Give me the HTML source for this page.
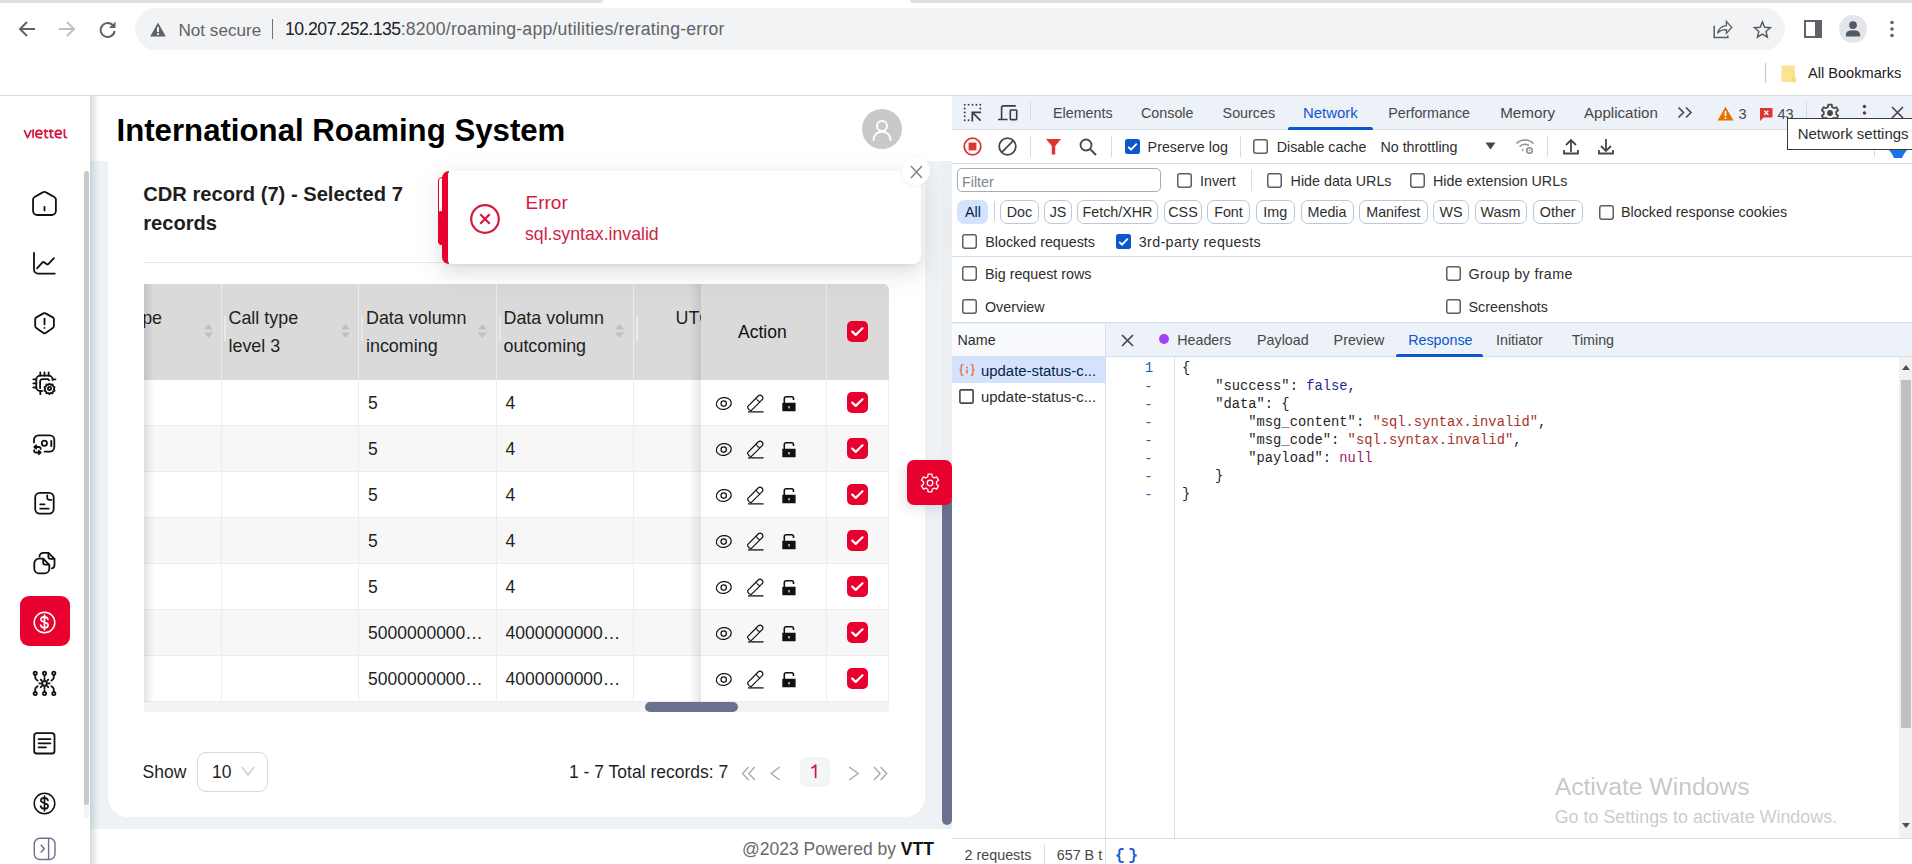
<!DOCTYPE html>
<html><head><meta charset="utf-8"><title>International Roaming System</title>
<style>
html,body{margin:0;padding:0;width:1912px;height:864px;overflow:hidden;background:#fff;position:relative;font-family:'Liberation Sans',sans-serif}
.t{position:absolute;white-space:pre;line-height:1}
.r{position:absolute;display:block}
svg.r{overflow:visible}
</style></head><body>

<div class="r" style="left:0px;top:0px;width:603px;height:3px;background:#dee1e6;border-bottom-right-radius:3px"></div>
<div class="r" style="left:910px;top:0px;width:1002px;height:3px;background:#dee1e6;border-bottom-left-radius:3px"></div>
<div class="r" style="left:135px;top:8px;width:1650px;height:42px;background:#f1f3f4;border-radius:21px"></div>
<svg class="r" style="left:18px;top:20px;" width="18" height="18" viewBox="0 0 18 18"><path d="M17 9H2.5M9 2L2 9l7 7" fill="none" stroke="#5f6368" stroke-width="2"/></svg>
<svg class="r" style="left:58px;top:20px;" width="18" height="18" viewBox="0 0 18 18"><path d="M1 9h14.5M9 2l7 7-7 7" fill="none" stroke="#bdc1c6" stroke-width="2"/></svg>
<svg class="r" style="left:98px;top:20px;" width="19" height="19" viewBox="0 0 19 19"><path d="M15.5 6.2A7 7 0 1 0 16.6 11" fill="none" stroke="#5f6368" stroke-width="2"/><path d="M17.5 1.5v6.5h-6.5z" fill="#5f6368"/></svg>
<svg class="r" style="left:150px;top:22px;" width="16" height="15" viewBox="0 0 16 15"><path d="M8 0.5L15.8 14.5H0.2z" fill="#5f6368"/><rect x="7.1" y="5" width="1.8" height="5" fill="#fff"/><rect x="7.1" y="11.2" width="1.8" height="1.8" fill="#fff"/></svg>
<div class="t" style="left:178.5px;top:21.86px;font-size:17.1px;color:#5f6368;font-weight:400;font-family:'Liberation Sans',sans-serif;">Not secure</div>
<div class="r" style="left:271.5px;top:19px;width:1.3px;height:20px;background:#6f7377"></div>
<div class="t" style="left:285px;top:21.40px;font-size:17.65px;color:#5f6368;font-family:'Liberation Sans',sans-serif"><span style="color:#202124;letter-spacing:-0.5px">10.207.252.135</span><span style="letter-spacing:0.22px">:8200/roaming-app/utilities/rerating-error</span></div>
<svg class="r" style="left:1705px;top:12px;" width="30" height="30" viewBox="0 0 30 30"><path d="M9.2 13.8V25.5H22.8V23.4" fill="none" stroke="#585b5f" stroke-width="1.5"/><path d="M12.6 21.3Q14 14.2 21.4 13.6V9.4L26.7 15.4 21.4 21.4V17.6Q15.6 17.4 12.6 21.3Z" fill="none" stroke="#585b5f" stroke-width="1.3" stroke-linejoin="miter"/></svg>
<svg class="r" style="left:1752px;top:20px;" width="21" height="19" viewBox="0 0 21 19"><path d="M10.40 1.90 L12.62 7.24 L18.39 7.70 L13.99 11.47 L15.34 17.10 L10.40 14.08 L5.46 17.10 L6.81 11.47 L2.41 7.70 L8.18 7.24Z" fill="none" stroke="#585b5f" stroke-width="1.45" stroke-linejoin="miter"/></svg>
<svg class="r" style="left:1804px;top:20px;" width="18" height="18" viewBox="0 0 18 18"><rect x="1" y="1" width="16" height="16" fill="none" stroke="#5f6368" stroke-width="2"/><rect x="11" y="1" width="6" height="16" fill="#5f6368"/></svg>
<div class="r" style="left:1839px;top:15px;width:28px;height:28px;background:#e3e5e8;border-radius:50%"></div>
<svg class="r" style="left:1845px;top:20px;" width="16" height="17" viewBox="0 0 16 17"><circle cx="8" cy="5.1" r="3.9" fill="#525a6a"/><path d="M0.9 16.5V14.6Q0.9 10.2 8 10.2Q15.1 10.2 15.1 14.6V16.5Z" fill="#525a6a"/></svg>
<svg class="r" style="left:1889px;top:20px;" width="6" height="18" viewBox="0 0 6 18"><circle cx="3" cy="2.5" r="1.8" fill="#5f6368"/><circle cx="3" cy="9" r="1.8" fill="#5f6368"/><circle cx="3" cy="15.5" r="1.8" fill="#5f6368"/></svg>
<div class="r" style="left:1765px;top:63px;width:1px;height:20px;background:#c7c7c7"></div>
<svg class="r" style="left:1780px;top:64px;" width="17" height="19" viewBox="0 0 17 19"><path d="M1.5 1.5h11.5a2 2 0 0 1 2 2v13.5a1 1 0 0 1-1 1H2.5a1 1 0 0 1-1-1z" fill="#fde293"/><rect x="12.5" y="13.5" width="3" height="4.5" rx="0.5" fill="#fde293" stroke="#f2c94c" stroke-width="0.6"/></svg>
<div class="t" style="left:1808px;top:66.09px;font-size:14.6px;color:#202124;font-weight:400;font-family:'Liberation Sans',sans-serif;">All Bookmarks</div>
<div class="r" style="left:0px;top:95px;width:1912px;height:1px;background:#dadce0"></div>
<div class="r" style="left:0px;top:96px;width:90px;height:768px;background:#fff"></div>
<svg class="r" style="left:20px;top:120px;" width="52" height="26" viewBox="0 0 52 26"><g fill="none" stroke="#d4173f" stroke-width="1.75" stroke-linecap="butt" stroke-linejoin="round"><path d="M4.2 10.2L7.6 17.6 11.2 10.2"/><path d="M13.1 9.2V17.8"/><path d="M22.1 14.1H16.2M22 14.1C22 11.8 20.8 10.4 19.1 10.4 17.2 10.4 15.9 11.9 15.9 14.1 15.9 16.4 17.2 17.6 19.3 17.6H22"/><path d="M25.3 9.2V15.2C25.3 17 26 17.6 27.3 17.6H28.4M23.6 11H28.2"/><path d="M30.6 9.2V15.2C30.6 17 31.3 17.6 32.6 17.6H33.7M28.9 11H33.5"/><path d="M41.5 14.1H35.6M41.4 14.1C41.4 11.8 40.2 10.4 38.5 10.4 36.6 10.4 35.3 11.9 35.3 14.1 35.3 16.4 36.6 17.6 38.7 17.6H41.4"/><path d="M44.4 9V15.6C44.4 17 45 17.6 46.3 17.6H47.2"/></g></svg>
<div class="r" style="left:84px;top:171px;width:5px;height:647px;background:#f4f4f4;border-radius:3px"></div>
<div class="r" style="left:84px;top:171px;width:5px;height:634px;background:#c9c9c9;border-radius:3px"></div>
<svg class="r" style="left:28px;top:186px;" width="32" height="36" viewBox="0 0 32 36"><path d="M5.05 13.6Q5.05 12 6.6 11L14.3 6.6Q16.4 5.3 18.5 6.6L26.3 11Q27.9 12 27.9 13.6V24.8a4.2 4.2 0 0 1-4.2 4.2H9.25a4.2 4.2 0 0 1-4.2-4.2Z" fill="none" stroke="#111" stroke-width="1.8" stroke-linecap="round" stroke-linejoin="round"/><path d="M16.5 20.8V24.4" fill="none" stroke="#111" stroke-width="1.8" stroke-linecap="round" stroke-linejoin="round"/></svg>
<svg class="r" style="left:28px;top:246px;" width="32" height="36" viewBox="0 0 32 36"><path d="M6 6.8V23.6a4 4 0 0 0 4 4H26.8" fill="none" stroke="#111" stroke-width="1.8" stroke-linecap="round" stroke-linejoin="round"/><path d="M9 22.4L14.3 16.6Q15.2 15.6 16.3 16.4L18.5 18Q19.6 18.8 20.5 17.8L26 12.1" fill="none" stroke="#111" stroke-width="1.8" stroke-linecap="round" stroke-linejoin="round"/></svg>
<svg class="r" style="left:28px;top:306px;" width="32" height="36" viewBox="0 0 32 36"><path d="M15.4 7.4Q16.5 6.8 17.6 7.4L24.8 11.4Q25.9 12 25.9 13.3V20Q25.9 21.3 24.8 21.9L17.6 26.9Q16.5 27.6 15.4 26.9L8.3 21.9Q7.2 21.3 7.2 20V13.3Q7.2 12 8.3 11.4Z" fill="none" stroke="#111" stroke-width="1.8" stroke-linecap="round" stroke-linejoin="round"/><path d="M16.5 12.6V18.4" fill="none" stroke="#111" stroke-width="1.8" stroke-linecap="round" stroke-linejoin="round"/><circle cx="16.5" cy="21.9" r="0.9" fill="#111"/></svg>
<svg class="r" style="left:28px;top:366px;" width="32" height="36" viewBox="0 0 32 36"><path d="M24.6 14V13.6a4 4 0 0 0-4-4H12.3a4 4 0 0 0-4 4V21a4 4 0 0 0 4 4H14" fill="none" stroke="#111" stroke-width="1.8" stroke-linecap="round" stroke-linejoin="round"/><path d="M12.1 22.2V15.4a2.2 2.2 0 0 1 2.2-2.2H19a2 2 0 0 1 2 1" fill="none" stroke="#111" stroke-width="1.8" stroke-linecap="round" stroke-linejoin="round" stroke-width="1.6"/><path d="M12.3 6.4V9.6M16.5 6.4V9.6M20.6 6.4V9.6M5.3 13.3H8.3M5.3 17.4H8.3M5.3 21.5H8.3M24.6 13.3H27.5M12.3 25V28.2" fill="none" stroke="#111" stroke-width="1.8" stroke-linecap="round" stroke-linejoin="round" stroke-width="1.6"/><path d="M21.5 17.6l1.3 1.3 1.8-.4.4 1.8 1.6.9-.8 1.7.8 1.7-1.6.9-.4 1.8-1.8-.4-1.3 1.3-1.3-1.3-1.8.4-.4-1.8-1.6-.9.8-1.7-.8-1.7 1.6-.9.4-1.8 1.8.4z" fill="none" stroke="#111" stroke-width="1.8" stroke-linecap="round" stroke-linejoin="round" stroke-width="1.5"/><circle cx="21.5" cy="22.5" r="1.6" fill="none" stroke="#111" stroke-width="1.8" stroke-linecap="round" stroke-linejoin="round" stroke-width="1.5"/></svg>
<svg class="r" style="left:28px;top:426px;" width="32" height="36" viewBox="0 0 32 36"><path d="M6 16.4V13.8a4.5 4.5 0 0 1 4.5-4.5H21.8a4.5 4.5 0 0 1 4.5 4.5V21.1a4.5 4.5 0 0 1-4.5 4.5H16.6" fill="none" stroke="#111" stroke-width="1.8" stroke-linecap="round" stroke-linejoin="round"/><circle cx="16.4" cy="17.3" r="2.6" fill="none" stroke="#111" stroke-width="1.8" stroke-linecap="round" stroke-linejoin="round"/><path d="M23.3 14.8V20.2" fill="none" stroke="#111" stroke-width="1.8" stroke-linecap="round" stroke-linejoin="round"/><path d="M12.6 23V22.6a1.6 1.6 0 0 0-1.6-1.6H6.4M8.2 19.3L6.3 21 8.2 22.7M6.1 24.2V25a1.5 1.5 0 0 0 1.5 1.5H12.6M10.8 24.8L12.7 26.5 10.8 28.2" fill="none" stroke="#111" stroke-width="1.8" stroke-linecap="round" stroke-linejoin="round" stroke-width="1.6"/></svg>
<svg class="r" style="left:28px;top:486px;" width="32" height="36" viewBox="0 0 32 36"><rect x="7.2" y="6.9" width="18.5" height="20.8" rx="4.6" fill="none" stroke="#111" stroke-width="1.8" stroke-linecap="round" stroke-linejoin="round"/><path d="M19.2 9.4V11.4a2.4 2.4 0 0 0 2.4 2.4H23.4" fill="none" stroke="#111" stroke-width="1.8" stroke-linecap="round" stroke-linejoin="round"/><path d="M12.2 18.3H16.5M12.2 22.6H20.7" fill="none" stroke="#111" stroke-width="1.8" stroke-linecap="round" stroke-linejoin="round"/></svg>
<svg class="r" style="left:28px;top:546px;" width="32" height="36" viewBox="0 0 32 36"><path d="M11.5 10.6a3.8 3.8 0 0 1 3.8-3.8H20.4L26.5 12.8V19a3.5 3.5 0 0 1-2.6 3.4" fill="none" stroke="#111" stroke-width="1.8" stroke-linecap="round" stroke-linejoin="round"/><path d="M20.4 7V10.8a2 2 0 0 0 2 2H26.3" fill="none" stroke="#111" stroke-width="1.8" stroke-linecap="round" stroke-linejoin="round"/><path d="M6.3 17.2a4.5 4.5 0 0 1 4.5-4.5H15.2L21.3 18.8V22.8a4.5 4.5 0 0 1-4.5 4.5H10.8a4.5 4.5 0 0 1-4.5-4.5Z" fill="none" stroke="#111" stroke-width="1.8" stroke-linecap="round" stroke-linejoin="round"/><path d="M15.2 12.9V16.6a2 2 0 0 0 2 2H21.1" fill="none" stroke="#111" stroke-width="1.8" stroke-linecap="round" stroke-linejoin="round"/></svg>
<div class="r" style="left:20px;top:596px;width:50px;height:50px;background:#e8002e;border-radius:9px"></div>
<svg class="r" style="left:28px;top:605px;" width="32" height="36" viewBox="0 0 32 36"><circle cx="16.5" cy="17.5" r="10.3" fill="none" stroke="#fff" stroke-width="1.5"/><path d="M19.9 14.4c-.4-1.7-1.7-2.6-3.5-2.6-2 0-3.5 1.1-3.5 2.6 0 3.6 7.2 1.7 7.2 5.6 0 1.6-1.5 2.8-3.7 2.8-2 0-3.4-1-3.8-2.8M16.5 10.2V24.8" fill="none" stroke="#fff" stroke-width="1.7" stroke-linecap="round"/></svg>
<svg class="r" style="left:28px;top:666px;" width="32" height="36" viewBox="0 0 32 36"><g fill="none" stroke="#111" stroke-width="1.8" stroke-linecap="round" stroke-linejoin="round" stroke-width="1.6"><circle cx="7.2" cy="7.3" r="1.6"/><circle cx="16.5" cy="7.3" r="1.6"/><circle cx="25.8" cy="7.3" r="1.6"/><circle cx="7.2" cy="27.5" r="1.6"/><circle cx="16.5" cy="27.5" r="1.6"/><circle cx="25.8" cy="27.5" r="1.6"/><circle cx="16.5" cy="17.4" r="2.4" stroke-width="2"/><path d="M16.5 13.2V12.3M16.5 21.6V22.5M12.3 17.4H11.4M20.7 17.4H21.6M13.5 14.4l-.7-.7M19.5 20.4l.7.7M19.5 14.4l.7-.7M13.5 20.4l-.7.7" stroke-width="1.9"/><path d="M16.5 9V10.6M16.5 24.2V25.8M7.2 9V11.2Q7.2 12.4 8.2 13.4L9.6 14.6M25.8 9V11.2Q25.8 12.4 24.8 13.4L23.4 14.6M7.2 25.8V23.6Q7.2 22.4 8.2 21.4L9.6 20.2M25.8 25.8V23.6Q25.8 22.4 24.8 21.4L23.4 20.2"/></g></svg>
<svg class="r" style="left:28px;top:726px;" width="32" height="36" viewBox="0 0 32 36"><rect x="6.2" y="7.2" width="20.3" height="20.3" rx="2.6" fill="none" stroke="#111" stroke-width="1.8" stroke-linecap="round" stroke-linejoin="round"/><path d="M10.6 13.2H22.4M10.6 17.3H22.4M10.6 21.3H18" fill="none" stroke="#111" stroke-width="1.8" stroke-linecap="round" stroke-linejoin="round"/></svg>
<svg class="r" style="left:28px;top:786px;" width="32" height="36" viewBox="0 0 32 36"><circle cx="16.5" cy="17.5" r="10.3" fill="none" stroke="#111" stroke-width="1.5"/><path d="M19.9 14.4c-.4-1.7-1.7-2.6-3.5-2.6-2 0-3.5 1.1-3.5 2.6 0 3.6 7.2 1.7 7.2 5.6 0 1.6-1.5 2.8-3.7 2.8-2 0-3.4-1-3.8-2.8M16.5 10.2V24.8" fill="none" stroke="#111" stroke-width="1.7" stroke-linecap="round"/></svg>
<svg class="r" style="left:28px;top:832px;" width="32" height="32" viewBox="0 0 32 32"><rect x="6.3" y="6.3" width="20.7" height="21.2" rx="5.5" fill="none" stroke="#6b7190" stroke-width="1.4"/><path d="M20.6 6.3V27.5" stroke="#6b7190" stroke-width="1.4"/><path d="M13.2 13.3L16.2 16.7 13.2 20" fill="none" stroke="#6b7190" stroke-width="1.5" stroke-linecap="round" stroke-linejoin="round"/></svg>
<div class="r" style="left:90px;top:96px;width:862px;height:66px;background:#fff"></div>
<div class="r" style="left:90px;top:161px;width:862px;height:668px;background:#eef2f4"></div>
<div class="r" style="left:90px;top:829px;width:862px;height:35px;background:#fff"></div>
<div class="r" style="left:90px;top:96px;width:9px;height:768px;background:linear-gradient(90deg,rgba(120,135,145,0.30),rgba(120,135,145,0))"></div>
<div class="t" style="left:116.5px;top:114.88px;font-size:31.2px;color:#000;font-weight:700;font-family:'Liberation Sans',sans-serif;">International Roaming System</div>
<div class="r" style="left:862px;top:109px;width:40px;height:40px;background:#c9c9c9;border-radius:50%"></div>
<svg class="r" style="left:869px;top:117px;" width="26" height="26" viewBox="0 0 26 26"><circle cx="13" cy="9" r="5" fill="none" stroke="#fff" stroke-width="2"/><path d="M4.5 23c0-5 3.8-8.2 8.5-8.2s8.5 3.2 8.5 8.2" fill="none" stroke="#fff" stroke-width="2" stroke-linecap="round"/></svg>
<div class="r" style="left:108px;top:161px;width:817px;height:656px;background:#fff;border-radius:0 0 20px 20px"></div>
<div class="t" style="left:143.2px;top:183.57px;font-size:20.15px;color:#1e1e1e;font-weight:700;font-family:'Liberation Sans',sans-serif;">CDR record (7) - Selected 7</div>
<div class="t" style="left:143.2px;top:213.47px;font-size:20.15px;color:#1e1e1e;font-weight:700;font-family:'Liberation Sans',sans-serif;">records</div>
<div class="r" style="left:143px;top:262px;width:747px;height:1px;background:#e8e8e8"></div>
<div class="r" style="left:942px;top:161px;width:10px;height:668px;background:#eceff1"></div>
<div class="t" style="left:742px;top:840.62px;font-size:17.5px;color:#6b6b6b;font-family:'Liberation Sans',sans-serif">@2023 Powered by <b style="color:#111">VTT</b></div>
<div class="r" style="left:144px;top:284px;width:745px;height:428px;overflow:hidden;border-top-right-radius:6px">
<div class="r" style="left:0px;top:0px;width:745px;height:96px;background:#dadada"></div>
<div class="r" style="left:0px;top:96px;width:745px;height:46px;background:#ffffff"></div>
<div class="r" style="left:0px;top:141px;width:745px;height:1px;background:#ededed"></div>
<div class="r" style="left:0px;top:142px;width:745px;height:46px;background:#f7f7f7"></div>
<div class="r" style="left:0px;top:187px;width:745px;height:1px;background:#ededed"></div>
<div class="r" style="left:0px;top:188px;width:745px;height:46px;background:#ffffff"></div>
<div class="r" style="left:0px;top:233px;width:745px;height:1px;background:#ededed"></div>
<div class="r" style="left:0px;top:234px;width:745px;height:46px;background:#f7f7f7"></div>
<div class="r" style="left:0px;top:279px;width:745px;height:1px;background:#ededed"></div>
<div class="r" style="left:0px;top:280px;width:745px;height:46px;background:#ffffff"></div>
<div class="r" style="left:0px;top:325px;width:745px;height:1px;background:#ededed"></div>
<div class="r" style="left:0px;top:326px;width:745px;height:46px;background:#f7f7f7"></div>
<div class="r" style="left:0px;top:371px;width:745px;height:1px;background:#ededed"></div>
<div class="r" style="left:0px;top:372px;width:745px;height:46px;background:#ffffff"></div>
<div class="r" style="left:0px;top:417px;width:745px;height:1px;background:#ededed"></div>
<div class="r" style="left:77px;top:0px;width:1px;height:96px;background:#ececec"></div>
<div class="r" style="left:77px;top:96px;width:1px;height:322px;background:#ededed"></div>
<div class="r" style="left:214px;top:0px;width:1px;height:96px;background:#ececec"></div>
<div class="r" style="left:214px;top:96px;width:1px;height:322px;background:#ededed"></div>
<div class="r" style="left:352px;top:0px;width:1px;height:96px;background:#ececec"></div>
<div class="r" style="left:352px;top:96px;width:1px;height:322px;background:#ededed"></div>
<div class="r" style="left:489px;top:0px;width:1px;height:96px;background:#ececec"></div>
<div class="r" style="left:489px;top:96px;width:1px;height:322px;background:#ededed"></div>
<div class="r" style="left:80px;top:32px;width:2px;height:25px;background:#e9e9e9"></div>
<div class="r" style="left:217px;top:32px;width:2px;height:25px;background:#e9e9e9"></div>
<div class="r" style="left:355px;top:32px;width:2px;height:25px;background:#e9e9e9"></div>
<div class="r" style="left:492px;top:32px;width:2px;height:25px;background:#e9e9e9"></div>
<div class="t" style="left:-10.800000000000011px;top:25.79px;font-size:17.9px;color:#1f1f1f;font-weight:400;">ype</div>
<div class="t" style="left:84.5px;top:25.79px;font-size:17.9px;color:#1f1f1f;font-weight:400;">Call type</div>
<div class="t" style="left:84.5px;top:53.59px;font-size:17.9px;color:#1f1f1f;font-weight:400;">level 3</div>
<div class="t" style="left:222px;top:25.79px;font-size:17.9px;color:#1f1f1f;font-weight:400;">Data volumn</div>
<div class="t" style="left:222px;top:53.59px;font-size:17.9px;color:#1f1f1f;font-weight:400;">incoming</div>
<div class="t" style="left:359.5px;top:25.79px;font-size:17.9px;color:#1f1f1f;font-weight:400;">Data volumn</div>
<div class="t" style="left:359.5px;top:53.59px;font-size:17.9px;color:#1f1f1f;font-weight:400;">outcoming</div>
<div class="t" style="left:531.5px;top:25.79px;font-size:17.9px;color:#1f1f1f;font-weight:400;">UTC</div>
<svg class="r" style="left:58.5px;top:39px" width="11" height="16" viewBox="0 0 11 16"><path d="M5.5 1L10 6.5H1z" fill="#bfbfbf"/><path d="M5.5 15L10 9.5H1z" fill="#bfbfbf"/></svg>
<svg class="r" style="left:196px;top:39px" width="11" height="16" viewBox="0 0 11 16"><path d="M5.5 1L10 6.5H1z" fill="#bfbfbf"/><path d="M5.5 15L10 9.5H1z" fill="#bfbfbf"/></svg>
<svg class="r" style="left:333px;top:39px" width="11" height="16" viewBox="0 0 11 16"><path d="M5.5 1L10 6.5H1z" fill="#bfbfbf"/><path d="M5.5 15L10 9.5H1z" fill="#bfbfbf"/></svg>
<svg class="r" style="left:470px;top:39px" width="11" height="16" viewBox="0 0 11 16"><path d="M5.5 1L10 6.5H1z" fill="#bfbfbf"/><path d="M5.5 15L10 9.5H1z" fill="#bfbfbf"/></svg>
<div class="t" style="left:224px;top:111.12px;font-size:17.5px;color:#1f1f1f;font-weight:400;">5</div>
<div class="t" style="left:361.5px;top:111.12px;font-size:17.5px;color:#1f1f1f;font-weight:400;">4</div>
<div class="t" style="left:224px;top:157.12px;font-size:17.5px;color:#1f1f1f;font-weight:400;">5</div>
<div class="t" style="left:361.5px;top:157.12px;font-size:17.5px;color:#1f1f1f;font-weight:400;">4</div>
<div class="t" style="left:224px;top:203.12px;font-size:17.5px;color:#1f1f1f;font-weight:400;">5</div>
<div class="t" style="left:361.5px;top:203.12px;font-size:17.5px;color:#1f1f1f;font-weight:400;">4</div>
<div class="t" style="left:224px;top:249.12px;font-size:17.5px;color:#1f1f1f;font-weight:400;">5</div>
<div class="t" style="left:361.5px;top:249.12px;font-size:17.5px;color:#1f1f1f;font-weight:400;">4</div>
<div class="t" style="left:224px;top:295.12px;font-size:17.5px;color:#1f1f1f;font-weight:400;">5</div>
<div class="t" style="left:361.5px;top:295.12px;font-size:17.5px;color:#1f1f1f;font-weight:400;">4</div>
<div class="t" style="left:224px;top:341.12px;font-size:17.5px;color:#1f1f1f;font-weight:400;">5000000000…</div>
<div class="t" style="left:361.5px;top:341.12px;font-size:17.5px;color:#1f1f1f;font-weight:400;">4000000000…</div>
<div class="t" style="left:224px;top:387.12px;font-size:17.5px;color:#1f1f1f;font-weight:400;">5000000000…</div>
<div class="t" style="left:361.5px;top:387.12px;font-size:17.5px;color:#1f1f1f;font-weight:400;">4000000000…</div>
<div class="r" style="left:0px;top:0px;width:10px;height:418px;background:linear-gradient(90deg,rgba(0,0,0,0.10),rgba(0,0,0,0))"></div>
<div class="r" style="left:557px;top:0px;width:188px;height:96px;background:#dadada"></div>
<div class="r" style="left:557px;top:96px;width:188px;height:46px;background:#ffffff"></div>
<div class="r" style="left:557px;top:141px;width:188px;height:1px;background:#ededed"></div>
<div class="r" style="left:557px;top:142px;width:188px;height:46px;background:#f7f7f7"></div>
<div class="r" style="left:557px;top:187px;width:188px;height:1px;background:#ededed"></div>
<div class="r" style="left:557px;top:188px;width:188px;height:46px;background:#ffffff"></div>
<div class="r" style="left:557px;top:233px;width:188px;height:1px;background:#ededed"></div>
<div class="r" style="left:557px;top:234px;width:188px;height:46px;background:#f7f7f7"></div>
<div class="r" style="left:557px;top:279px;width:188px;height:1px;background:#ededed"></div>
<div class="r" style="left:557px;top:280px;width:188px;height:46px;background:#ffffff"></div>
<div class="r" style="left:557px;top:325px;width:188px;height:1px;background:#ededed"></div>
<div class="r" style="left:557px;top:326px;width:188px;height:46px;background:#f7f7f7"></div>
<div class="r" style="left:557px;top:371px;width:188px;height:1px;background:#ededed"></div>
<div class="r" style="left:557px;top:372px;width:188px;height:46px;background:#ffffff"></div>
<div class="r" style="left:557px;top:417px;width:188px;height:1px;background:#ededed"></div>
<div class="r" style="left:682px;top:0px;width:1px;height:96px;background:#ececec"></div>
<div class="r" style="left:682px;top:96px;width:1px;height:322px;background:#ededed"></div>
<div class="r" style="left:744px;top:96px;width:1px;height:322px;background:#f0f0f0"></div>
<div class="r" style="left:545px;top:0px;width:12px;height:418px;background:linear-gradient(90deg,rgba(0,0,0,0),rgba(0,0,0,0.09))"></div>
<div class="t" style="left:594px;top:39.82px;font-size:17.5px;color:#111;font-weight:400;">Action</div>
<svg class="r" style="left:702.5px;top:36.5px" width="21" height="21" viewBox="0 0 21 21"><rect x="0" y="0" width="21" height="21" rx="5" fill="#e8002e"/><path d="M5.3 10.6l3.4 3.3 6.8-6.6" fill="none" stroke="#fff" stroke-width="2.2" stroke-linecap="round" stroke-linejoin="round"/></svg>
<svg class="r" style="left:702.5px;top:107.5px" width="21" height="21" viewBox="0 0 21 21"><rect x="0" y="0" width="21" height="21" rx="5" fill="#e8002e"/><path d="M5.3 10.6l3.4 3.3 6.8-6.6" fill="none" stroke="#fff" stroke-width="2.2" stroke-linecap="round" stroke-linejoin="round"/></svg>
<svg class="r" style="left:566px;top:106px" width="90" height="26" viewBox="710 390 90 26"><ellipse cx="723.8" cy="403.5" rx="7.5" ry="5.9" transform="rotate(-10 723.8 403.5)" fill="none" stroke="#111" stroke-width="1.2"/><circle cx="723.7" cy="403.6" r="2.7" fill="none" stroke="#111" stroke-width="1.2"/><g transform="translate(755.6 402.4) rotate(-45)"><path d="M-8.6 -2.7H6.3a2.7 2.7 0 0 1 0 5.4H-8.6Q-9.8 1.5 -9.8 0Q-9.8 -1.5 -8.6 -2.7Z" fill="none" stroke="#111" stroke-width="1.2" stroke-linejoin="round"/><path d="M3.4 -2.6Q2.2 0 3.4 2.6" fill="none" stroke="#111" stroke-width="1.1"/></g><path d="M748 411.9H763.6" stroke="#111" stroke-width="1.3"/><path d="M784.3 403.2V398.6Q784.3 396.7 786.2 396.7H791.6Q793.5 396.7 793.5 398.6V400" fill="none" stroke="#111" stroke-width="1.6"/><rect x="782.3" y="402.8" width="13.3" height="8.5" rx="0.6" fill="#111"/><path d="M788.2 406.2h1.6l-.3 2.4h-1z" fill="#fff"/></svg>
<svg class="r" style="left:702.5px;top:153.5px" width="21" height="21" viewBox="0 0 21 21"><rect x="0" y="0" width="21" height="21" rx="5" fill="#e8002e"/><path d="M5.3 10.6l3.4 3.3 6.8-6.6" fill="none" stroke="#fff" stroke-width="2.2" stroke-linecap="round" stroke-linejoin="round"/></svg>
<svg class="r" style="left:566px;top:152px" width="90" height="26" viewBox="710 390 90 26"><ellipse cx="723.8" cy="403.5" rx="7.5" ry="5.9" transform="rotate(-10 723.8 403.5)" fill="none" stroke="#111" stroke-width="1.2"/><circle cx="723.7" cy="403.6" r="2.7" fill="none" stroke="#111" stroke-width="1.2"/><g transform="translate(755.6 402.4) rotate(-45)"><path d="M-8.6 -2.7H6.3a2.7 2.7 0 0 1 0 5.4H-8.6Q-9.8 1.5 -9.8 0Q-9.8 -1.5 -8.6 -2.7Z" fill="none" stroke="#111" stroke-width="1.2" stroke-linejoin="round"/><path d="M3.4 -2.6Q2.2 0 3.4 2.6" fill="none" stroke="#111" stroke-width="1.1"/></g><path d="M748 411.9H763.6" stroke="#111" stroke-width="1.3"/><path d="M784.3 403.2V398.6Q784.3 396.7 786.2 396.7H791.6Q793.5 396.7 793.5 398.6V400" fill="none" stroke="#111" stroke-width="1.6"/><rect x="782.3" y="402.8" width="13.3" height="8.5" rx="0.6" fill="#111"/><path d="M788.2 406.2h1.6l-.3 2.4h-1z" fill="#fff"/></svg>
<svg class="r" style="left:702.5px;top:199.5px" width="21" height="21" viewBox="0 0 21 21"><rect x="0" y="0" width="21" height="21" rx="5" fill="#e8002e"/><path d="M5.3 10.6l3.4 3.3 6.8-6.6" fill="none" stroke="#fff" stroke-width="2.2" stroke-linecap="round" stroke-linejoin="round"/></svg>
<svg class="r" style="left:566px;top:198px" width="90" height="26" viewBox="710 390 90 26"><ellipse cx="723.8" cy="403.5" rx="7.5" ry="5.9" transform="rotate(-10 723.8 403.5)" fill="none" stroke="#111" stroke-width="1.2"/><circle cx="723.7" cy="403.6" r="2.7" fill="none" stroke="#111" stroke-width="1.2"/><g transform="translate(755.6 402.4) rotate(-45)"><path d="M-8.6 -2.7H6.3a2.7 2.7 0 0 1 0 5.4H-8.6Q-9.8 1.5 -9.8 0Q-9.8 -1.5 -8.6 -2.7Z" fill="none" stroke="#111" stroke-width="1.2" stroke-linejoin="round"/><path d="M3.4 -2.6Q2.2 0 3.4 2.6" fill="none" stroke="#111" stroke-width="1.1"/></g><path d="M748 411.9H763.6" stroke="#111" stroke-width="1.3"/><path d="M784.3 403.2V398.6Q784.3 396.7 786.2 396.7H791.6Q793.5 396.7 793.5 398.6V400" fill="none" stroke="#111" stroke-width="1.6"/><rect x="782.3" y="402.8" width="13.3" height="8.5" rx="0.6" fill="#111"/><path d="M788.2 406.2h1.6l-.3 2.4h-1z" fill="#fff"/></svg>
<svg class="r" style="left:702.5px;top:245.5px" width="21" height="21" viewBox="0 0 21 21"><rect x="0" y="0" width="21" height="21" rx="5" fill="#e8002e"/><path d="M5.3 10.6l3.4 3.3 6.8-6.6" fill="none" stroke="#fff" stroke-width="2.2" stroke-linecap="round" stroke-linejoin="round"/></svg>
<svg class="r" style="left:566px;top:244px" width="90" height="26" viewBox="710 390 90 26"><ellipse cx="723.8" cy="403.5" rx="7.5" ry="5.9" transform="rotate(-10 723.8 403.5)" fill="none" stroke="#111" stroke-width="1.2"/><circle cx="723.7" cy="403.6" r="2.7" fill="none" stroke="#111" stroke-width="1.2"/><g transform="translate(755.6 402.4) rotate(-45)"><path d="M-8.6 -2.7H6.3a2.7 2.7 0 0 1 0 5.4H-8.6Q-9.8 1.5 -9.8 0Q-9.8 -1.5 -8.6 -2.7Z" fill="none" stroke="#111" stroke-width="1.2" stroke-linejoin="round"/><path d="M3.4 -2.6Q2.2 0 3.4 2.6" fill="none" stroke="#111" stroke-width="1.1"/></g><path d="M748 411.9H763.6" stroke="#111" stroke-width="1.3"/><path d="M784.3 403.2V398.6Q784.3 396.7 786.2 396.7H791.6Q793.5 396.7 793.5 398.6V400" fill="none" stroke="#111" stroke-width="1.6"/><rect x="782.3" y="402.8" width="13.3" height="8.5" rx="0.6" fill="#111"/><path d="M788.2 406.2h1.6l-.3 2.4h-1z" fill="#fff"/></svg>
<svg class="r" style="left:702.5px;top:291.5px" width="21" height="21" viewBox="0 0 21 21"><rect x="0" y="0" width="21" height="21" rx="5" fill="#e8002e"/><path d="M5.3 10.6l3.4 3.3 6.8-6.6" fill="none" stroke="#fff" stroke-width="2.2" stroke-linecap="round" stroke-linejoin="round"/></svg>
<svg class="r" style="left:566px;top:290px" width="90" height="26" viewBox="710 390 90 26"><ellipse cx="723.8" cy="403.5" rx="7.5" ry="5.9" transform="rotate(-10 723.8 403.5)" fill="none" stroke="#111" stroke-width="1.2"/><circle cx="723.7" cy="403.6" r="2.7" fill="none" stroke="#111" stroke-width="1.2"/><g transform="translate(755.6 402.4) rotate(-45)"><path d="M-8.6 -2.7H6.3a2.7 2.7 0 0 1 0 5.4H-8.6Q-9.8 1.5 -9.8 0Q-9.8 -1.5 -8.6 -2.7Z" fill="none" stroke="#111" stroke-width="1.2" stroke-linejoin="round"/><path d="M3.4 -2.6Q2.2 0 3.4 2.6" fill="none" stroke="#111" stroke-width="1.1"/></g><path d="M748 411.9H763.6" stroke="#111" stroke-width="1.3"/><path d="M784.3 403.2V398.6Q784.3 396.7 786.2 396.7H791.6Q793.5 396.7 793.5 398.6V400" fill="none" stroke="#111" stroke-width="1.6"/><rect x="782.3" y="402.8" width="13.3" height="8.5" rx="0.6" fill="#111"/><path d="M788.2 406.2h1.6l-.3 2.4h-1z" fill="#fff"/></svg>
<svg class="r" style="left:702.5px;top:337.5px" width="21" height="21" viewBox="0 0 21 21"><rect x="0" y="0" width="21" height="21" rx="5" fill="#e8002e"/><path d="M5.3 10.6l3.4 3.3 6.8-6.6" fill="none" stroke="#fff" stroke-width="2.2" stroke-linecap="round" stroke-linejoin="round"/></svg>
<svg class="r" style="left:566px;top:336px" width="90" height="26" viewBox="710 390 90 26"><ellipse cx="723.8" cy="403.5" rx="7.5" ry="5.9" transform="rotate(-10 723.8 403.5)" fill="none" stroke="#111" stroke-width="1.2"/><circle cx="723.7" cy="403.6" r="2.7" fill="none" stroke="#111" stroke-width="1.2"/><g transform="translate(755.6 402.4) rotate(-45)"><path d="M-8.6 -2.7H6.3a2.7 2.7 0 0 1 0 5.4H-8.6Q-9.8 1.5 -9.8 0Q-9.8 -1.5 -8.6 -2.7Z" fill="none" stroke="#111" stroke-width="1.2" stroke-linejoin="round"/><path d="M3.4 -2.6Q2.2 0 3.4 2.6" fill="none" stroke="#111" stroke-width="1.1"/></g><path d="M748 411.9H763.6" stroke="#111" stroke-width="1.3"/><path d="M784.3 403.2V398.6Q784.3 396.7 786.2 396.7H791.6Q793.5 396.7 793.5 398.6V400" fill="none" stroke="#111" stroke-width="1.6"/><rect x="782.3" y="402.8" width="13.3" height="8.5" rx="0.6" fill="#111"/><path d="M788.2 406.2h1.6l-.3 2.4h-1z" fill="#fff"/></svg>
<svg class="r" style="left:702.5px;top:383.5px" width="21" height="21" viewBox="0 0 21 21"><rect x="0" y="0" width="21" height="21" rx="5" fill="#e8002e"/><path d="M5.3 10.6l3.4 3.3 6.8-6.6" fill="none" stroke="#fff" stroke-width="2.2" stroke-linecap="round" stroke-linejoin="round"/></svg>
<svg class="r" style="left:566px;top:382px" width="90" height="26" viewBox="710 390 90 26"><ellipse cx="723.8" cy="403.5" rx="7.5" ry="5.9" transform="rotate(-10 723.8 403.5)" fill="none" stroke="#111" stroke-width="1.2"/><circle cx="723.7" cy="403.6" r="2.7" fill="none" stroke="#111" stroke-width="1.2"/><g transform="translate(755.6 402.4) rotate(-45)"><path d="M-8.6 -2.7H6.3a2.7 2.7 0 0 1 0 5.4H-8.6Q-9.8 1.5 -9.8 0Q-9.8 -1.5 -8.6 -2.7Z" fill="none" stroke="#111" stroke-width="1.2" stroke-linejoin="round"/><path d="M3.4 -2.6Q2.2 0 3.4 2.6" fill="none" stroke="#111" stroke-width="1.1"/></g><path d="M748 411.9H763.6" stroke="#111" stroke-width="1.3"/><path d="M784.3 403.2V398.6Q784.3 396.7 786.2 396.7H791.6Q793.5 396.7 793.5 398.6V400" fill="none" stroke="#111" stroke-width="1.6"/><rect x="782.3" y="402.8" width="13.3" height="8.5" rx="0.6" fill="#111"/><path d="M788.2 406.2h1.6l-.3 2.4h-1z" fill="#fff"/></svg>
<div class="r" style="left:0px;top:418px;width:745px;height:10px;background:#f3f3f3"></div>
<div class="r" style="left:501px;top:418px;width:93px;height:10px;background:#6b7190;border-radius:5px"></div>
</div>
<div class="t" style="left:142.5px;top:764.32px;font-size:17.5px;color:#1f1f1f;font-weight:400;font-family:'Liberation Sans',sans-serif;">Show</div>
<div class="r" style="left:197px;top:752px;width:71px;height:40px;box-sizing:border-box;border:1px solid #d9d9d9;border-radius:9px;background:#fff"></div>
<div class="t" style="left:212px;top:764.32px;font-size:17.5px;color:#1f1f1f;font-weight:400;font-family:'Liberation Sans',sans-serif;">10</div>
<svg class="r" style="left:241px;top:766px;" width="14" height="11" viewBox="0 0 14 11"><path d="M1 1.2l6 8 6-8" fill="none" stroke="#bfbfbf" stroke-width="1.1"/></svg>
<div class="t" style="left:569px;top:763.82px;font-size:17.5px;color:#1f1f1f;font-weight:400;font-family:'Liberation Sans',sans-serif;">1 - 7 Total records: 7</div>
<svg class="r" style="left:740px;top:765px;" width="18" height="18" viewBox="0 0 18 18"><path d="M8.6 2L2.6 8.5 8.6 15M14.8 2L8.8 8.5 14.8 15" fill="none" stroke="#a6a6a6" stroke-width="1.3" stroke-linecap="butt" stroke-linejoin="miter"/></svg>
<svg class="r" style="left:768px;top:765px;" width="14" height="18" viewBox="0 0 14 18"><path d="M11.6 2L3.2 8.5 11.6 15" fill="none" stroke="#a6a6a6" stroke-width="1.3" stroke-linecap="butt" stroke-linejoin="miter"/></svg>
<div class="r" style="left:800px;top:757px;width:30px;height:30px;background:#f4f5f7;border-radius:7px"></div>
<svg class="r" style="left:808px;top:763px;" width="12" height="17" viewBox="0 0 12 17"><path d="M7.6 1.6V15.2" stroke="#d0103a" stroke-width="1.7"/><path d="M7.6 2C6.6 3.6 5 4.6 3.2 5.1" fill="none" stroke="#d0103a" stroke-width="1.5"/></svg>
<svg class="r" style="left:847px;top:765px;" width="14" height="18" viewBox="0 0 14 18"><path d="M2.2 2L11.2 8.5 2.2 15" fill="none" stroke="#a6a6a6" stroke-width="1.3" stroke-linecap="butt" stroke-linejoin="miter"/></svg>
<svg class="r" style="left:872px;top:765px;" width="18" height="18" viewBox="0 0 18 18"><path d="M2 2L8.2 8.5 2 15M8.6 2L14.8 8.5 8.6 15" fill="none" stroke="#a6a6a6" stroke-width="1.3" stroke-linecap="butt" stroke-linejoin="miter"/></svg>
<div class="r" style="left:442px;top:171px;width:479px;height:93px;background:#fff;border-radius:8px;box-shadow:0 6px 16px rgba(0,0,0,0.08),0 3px 6px -4px rgba(0,0,0,0.12),0 9px 28px 8px rgba(0,0,0,0.05)"></div>
<div class="r" style="left:438px;top:177px;width:6px;height:68px;background:#fff;border:1px solid #e8002e;border-radius:4px 0 0 4px;box-sizing:border-box"></div>
<div class="r" style="left:438px;top:211px;width:6px;height:34px;background:#e8002e;border-radius:3px 0 0 4px"></div>
<div class="r" style="left:442px;top:171px;width:7px;height:93px;background:#e8002e;border-radius:8px 0 0 8px"></div>
<div class="r" style="left:448px;top:171px;width:4px;height:93px;background:#fff;border-radius:6px 0 0 6px"></div>
<svg class="r" style="left:470px;top:204px;" width="30" height="30" viewBox="0 0 30 30"><circle cx="15" cy="15" r="13.8" fill="none" stroke="#d41a3f" stroke-width="2.2"/><path d="M10.3 10.3l9.4 9.4M19.7 10.3l-9.4 9.4" stroke="#d41a3f" stroke-width="2.2"/></svg>
<div class="t" style="left:525.5px;top:192.75px;font-size:19px;color:#d41a3f;font-weight:400;font-family:'Liberation Sans',sans-serif;">Error</div>
<div class="t" style="left:525px;top:226.36px;font-size:17.7px;color:#cf2348;font-weight:400;font-family:'Liberation Sans',sans-serif;">sql.syntax.invalid</div>
<div class="r" style="left:901.7px;top:157px;width:28px;height:28px;background:#fff;border-radius:50%;box-shadow:0 1px 4px rgba(0,0,0,0.06)"></div>
<svg class="r" style="left:909.5px;top:164.5px;" width="13" height="14" viewBox="0 0 13 14"><path d="M1 1l11 12M12 1L1 13" stroke="#7a7a7a" stroke-width="1.25"/></svg>
<div class="r" style="left:942px;top:500px;width:9.5px;height:325px;background:#6b7190;border-radius:0 0 5px 5px"></div>
<div class="r" style="left:907px;top:460px;width:45px;height:45px;background:#e8002e;border-radius:7px;box-shadow:-3px 5px 12px rgba(0,0,0,0.10)"></div>
<svg class="r" style="left:920px;top:473px;" width="20" height="20" viewBox="0 0 20 20"><path d="M7.76 3.79 L8.04 1.22 L11.96 1.22 L12.24 3.79 L14.26 4.96 L16.62 3.91 L18.59 7.31 L16.50 8.83 L16.50 11.17 L18.59 12.69 L16.62 16.09 L14.26 15.04 L12.24 16.21 L11.96 18.78 L8.04 18.78 L7.76 16.21 L5.74 15.04 L3.38 16.09 L1.41 12.69 L3.50 11.17 L3.50 8.83 L1.41 7.31 L3.38 3.91 L5.74 4.96Z" fill="none" stroke="#fff" stroke-width="1.3" stroke-linejoin="round"/><circle cx="10" cy="10" r="2.8" fill="none" stroke="#fff" stroke-width="1.3"/></svg>
<div class="r" style="left:952px;top:96px;width:960px;height:768px;background:#fff"></div>
<div class="r" style="left:952px;top:96px;width:960px;height:33px;background:#edf1f8"></div>
<div class="r" style="left:952px;top:129px;width:960px;height:1px;background:#d4dfee"></div>
<svg class="r" style="left:955px;top:98px;" width="80" height="28" viewBox="955 98 80 28"><g fill="#3c3c3c"><circle cx="964.7" cy="104.8" r="0.95"/><circle cx="968.6" cy="104.8" r="0.95"/><circle cx="972.5" cy="104.8" r="0.95"/><circle cx="976.4" cy="104.8" r="0.95"/><circle cx="980.3" cy="104.8" r="0.95"/><circle cx="980.3" cy="108.5" r="0.95"/><circle cx="964.7" cy="108.5" r="0.95"/><circle cx="964.7" cy="112.5" r="0.95"/><circle cx="964.7" cy="116.3" r="0.95"/><circle cx="964.7" cy="120.3" r="0.95"/><circle cx="968.6" cy="120.3" r="0.95"/></g><path d="M972.3 121.5V112.3H981M973 113L980.6 120.6" fill="none" stroke="#3c3c3c" stroke-width="1.7"/><path d="M1001.6 119.5V107.8Q1001.6 105.9 1003.5 105.9H1015.8M998 119.5H1007.5" fill="none" stroke="#3c3c3c" stroke-width="1.6"/><rect x="1010.3" y="110" width="6.4" height="9.6" rx="0.8" fill="none" stroke="#3c3c3c" stroke-width="1.6"/></svg>
<div class="r" style="left:1030px;top:102px;width:1px;height:19px;background:#d3dbe6"></div>
<div class="t" style="left:1053px;top:105.84px;font-size:14.3px;color:#474747;font-weight:400;font-family:'Liberation Sans',sans-serif;">Elements</div>
<div class="t" style="left:1141px;top:105.84px;font-size:14.3px;color:#474747;font-weight:400;font-family:'Liberation Sans',sans-serif;">Console</div>
<div class="t" style="left:1222.6px;top:105.84px;font-size:14.3px;color:#474747;font-weight:400;font-family:'Liberation Sans',sans-serif;">Sources</div>
<div class="t" style="left:1388.2px;top:105.84px;font-size:14.3px;color:#474747;font-weight:400;font-family:'Liberation Sans',sans-serif;">Performance</div>
<div class="t" style="left:1500.2px;top:105.08px;font-size:15.2px;color:#474747;font-weight:400;font-family:'Liberation Sans',sans-serif;">Memory</div>
<div class="t" style="left:1584px;top:105.17px;font-size:15.1px;color:#474747;font-weight:400;font-family:'Liberation Sans',sans-serif;">Application</div>
<div class="t" style="left:1303px;top:105.94px;font-size:14.9px;color:#0b57d0;font-weight:400;font-family:'Liberation Sans',sans-serif;">Network</div>
<div class="r" style="left:1288px;top:127px;width:85px;height:3px;background:#0b57d0;border-radius:2px 2px 0 0"></div>
<svg class="r" style="left:1677px;top:106px;" width="17" height="13" viewBox="0 0 17 13"><path d="M1.5 1.5l5 5-5 5M9 1.5l5 5-5 5" fill="none" stroke="#474747" stroke-width="1.6"/></svg>
<svg class="r" style="left:1717px;top:106px;" width="17" height="15" viewBox="0 0 17 15"><path d="M8.5 0.8L16.5 14.5H0.5z" fill="#e37400"/><rect x="7.7" y="5" width="1.6" height="5" fill="#fff"/><rect x="7.7" y="11.2" width="1.6" height="1.6" fill="#fff"/></svg>
<div class="t" style="left:1738.5px;top:107.17px;font-size:14.5px;color:#474747;font-weight:400;font-family:'Liberation Sans',sans-serif;">3</div>
<svg class="r" style="left:1760px;top:108px;" width="13" height="13" viewBox="0 0 13 13"><path d="M0 0h12.5v9.5H3.5L0 13z" fill="#dc362e"/><path d="M4.3 2.8l4 4M8.3 2.8l-4 4" stroke="#fff" stroke-width="1.3"/></svg>
<div class="t" style="left:1777.5px;top:107.17px;font-size:14.5px;color:#474747;font-weight:400;font-family:'Liberation Sans',sans-serif;">43</div>
<div class="r" style="left:1806px;top:102px;width:1px;height:19px;background:#d3dbe6"></div>
<svg class="r" style="left:1819.5px;top:102.5px;" width="20" height="20" viewBox="0 0 20 20"><path d="M8.02 3.91 L8.21 1.59 L11.79 1.59 L11.98 3.91 L14.28 5.24 L16.39 4.25 L18.18 7.34 L16.26 8.67 L16.26 11.33 L18.18 12.66 L16.39 15.75 L14.28 14.76 L11.98 16.09 L11.79 18.41 L8.21 18.41 L8.02 16.09 L5.72 14.76 L3.61 15.75 L1.82 12.66 L3.74 11.33 L3.74 8.67 L1.82 7.34 L3.61 4.25 L5.72 5.24Z" fill="none" stroke="#474747" stroke-width="1.75" stroke-linejoin="round"/><circle cx="10" cy="10" r="2.9" fill="#474747"/></svg>
<svg class="r" style="left:1862px;top:104px;" width="5" height="18" viewBox="0 0 5 18"><circle cx="2.5" cy="2.5" r="1.7" fill="#474747"/><circle cx="2.5" cy="9" r="1.7" fill="#474747"/><circle cx="2.5" cy="15.5" r="1.7" fill="#474747"/></svg>
<svg class="r" style="left:1891px;top:106px;" width="13" height="13" viewBox="0 0 13 13"><path d="M1 1l11 11M12 1L1 12" stroke="#474747" stroke-width="1.7"/></svg>
<div class="r" style="left:952px;top:163px;width:960px;height:1px;background:#d4dfee"></div>
<svg class="r" style="left:963px;top:137px;" width="19" height="19" viewBox="0 0 19 19"><circle cx="9.5" cy="9.5" r="8.3" fill="none" stroke="#dc362e" stroke-width="1.8"/><rect x="5.6" y="5.6" width="7.8" height="7.8" fill="#dc362e"/></svg>
<svg class="r" style="left:998px;top:137px;" width="19" height="19" viewBox="0 0 19 19"><circle cx="9.5" cy="9.5" r="8.3" fill="none" stroke="#474747" stroke-width="1.8"/><path d="M15.3 3.7L3.7 15.3" stroke="#474747" stroke-width="1.8"/></svg>
<div class="r" style="left:1030px;top:136px;width:1px;height:21px;background:#d3dbe6"></div>
<svg class="r" style="left:1046px;top:139px;" width="15" height="16" viewBox="0 0 15 16"><path d="M0 0h15L9.2 7v8.5H5.8V7z" fill="#dc362e"/></svg>
<svg class="r" style="left:1079px;top:138px;" width="18" height="18" viewBox="0 0 18 18"><circle cx="7" cy="7" r="5.5" fill="none" stroke="#474747" stroke-width="1.8"/><path d="M11 11l6 6" stroke="#474747" stroke-width="2"/></svg>
<div class="r" style="left:1111px;top:136px;width:1px;height:21px;background:#d3dbe6"></div>
<svg class="r" style="left:1125px;top:139px;" width="15" height="15" viewBox="0 0 15 15"><rect x="0" y="0" width="15" height="15" rx="2.5" fill="#0b57d0"/><path d="M3.2 7.8l2.8 2.8 5.8-6" fill="none" stroke="#fff" stroke-width="1.8"/></svg>
<div class="t" style="left:1147.6px;top:139.84px;font-size:14.3px;color:#2e2e2e;font-weight:400;font-family:'Liberation Sans',sans-serif;">Preserve log</div>
<div class="r" style="left:1240px;top:136px;width:1px;height:21px;background:#d3dbe6"></div>
<svg class="r" style="left:1253px;top:139px;" width="15" height="15" viewBox="0 0 15 15"><rect x="0.75" y="0.75" width="13.5" height="13.5" rx="2.2" fill="#fff" stroke="#5e5e5e" stroke-width="1.5"/></svg>
<div class="t" style="left:1276.7px;top:139.84px;font-size:14.3px;color:#2e2e2e;font-weight:400;font-family:'Liberation Sans',sans-serif;">Disable cache</div>
<div class="t" style="left:1380.4px;top:139.84px;font-size:14.3px;color:#2e2e2e;font-weight:400;font-family:'Liberation Sans',sans-serif;">No throttling</div>
<svg class="r" style="left:1485px;top:142px;" width="11" height="8" viewBox="0 0 11 8"><path d="M0.5 0.5h10L5.5 7.5z" fill="#474747"/></svg>
<svg class="r" style="left:1515px;top:137px;" width="21" height="18" viewBox="0 0 21 18"><path d="M1.5 6.5a12 12 0 0 1 17 0M4.5 9.5a8 8 0 0 1 9.5-1" fill="none" stroke="#8a8d91" stroke-width="1.6"/><path d="M7 12.5l1.5 1" stroke="#8a8d91" stroke-width="1.6"/><circle cx="14.5" cy="13.5" r="2.8" fill="none" stroke="#8a8d91" stroke-width="1.6"/><circle cx="14.5" cy="13.5" r="0.8" fill="#8a8d91"/></svg>
<div class="r" style="left:1547px;top:136px;width:1px;height:21px;background:#d3dbe6"></div>
<svg class="r" style="left:1563px;top:138px;" width="16" height="17" viewBox="0 0 16 17"><path d="M8 14V2M3 7l5-5 5 5M1 12v3.5h14V12" fill="none" stroke="#474747" stroke-width="1.8"/></svg>
<svg class="r" style="left:1598px;top:138px;" width="16" height="17" viewBox="0 0 16 17"><path d="M8 1v12M3 8l5 5 5-5M1 12v3.5h14V12" fill="none" stroke="#474747" stroke-width="1.8"/></svg>
<div class="r" style="left:1874px;top:148px;width:1px;height:9px;background:#d3dbe6"></div>
<svg class="r" style="left:1889px;top:146px;" width="18" height="12" viewBox="0 0 18 12"><path d="M3 0h12l3 4-3 4-2 4H5L3 8 0 4z" fill="#1a73e8"/></svg>
<div class="r" style="left:1787px;top:118px;width:130px;height:32px;background:#fff;border:1px solid #3a3a3a;box-sizing:border-box"></div>
<div class="t" style="left:1797.7px;top:126.25px;font-size:15px;color:#2e2e2e;font-weight:400;font-family:'Liberation Sans',sans-serif;">Network settings</div>
<div class="r" style="left:957px;top:168px;width:204px;height:24px;box-sizing:border-box;border:1px solid #a9acb0;border-radius:5px;background:#fff"></div>
<div class="t" style="left:962px;top:174.84px;font-size:14.3px;color:#80868b;font-weight:400;font-family:'Liberation Sans',sans-serif;">Filter</div>
<svg class="r" style="left:1177px;top:173px;" width="15" height="15" viewBox="0 0 15 15"><rect x="0.75" y="0.75" width="13.5" height="13.5" rx="2.2" fill="#fff" stroke="#5e5e5e" stroke-width="1.5"/></svg>
<div class="t" style="left:1200px;top:174.34px;font-size:14.3px;color:#2e2e2e;font-weight:400;font-family:'Liberation Sans',sans-serif;">Invert</div>
<div class="r" style="left:1251px;top:170px;width:1px;height:21px;background:#d3dbe6"></div>
<svg class="r" style="left:1267px;top:173px;" width="15" height="15" viewBox="0 0 15 15"><rect x="0.75" y="0.75" width="13.5" height="13.5" rx="2.2" fill="#fff" stroke="#5e5e5e" stroke-width="1.5"/></svg>
<div class="t" style="left:1290.6px;top:174.34px;font-size:14.3px;color:#2e2e2e;font-weight:400;font-family:'Liberation Sans',sans-serif;">Hide data URLs</div>
<svg class="r" style="left:1410px;top:173px;" width="15" height="15" viewBox="0 0 15 15"><rect x="0.75" y="0.75" width="13.5" height="13.5" rx="2.2" fill="#fff" stroke="#5e5e5e" stroke-width="1.5"/></svg>
<div class="t" style="left:1433px;top:174.34px;font-size:14.3px;color:#2e2e2e;font-weight:400;font-family:'Liberation Sans',sans-serif;">Hide extension URLs</div>
<div class="r" style="left:957px;top:199.5px;width:31px;height:24.5px;background:#d3e3fd;border-radius:7px"></div>
<div class="t" style="left:965px;top:205.15px;font-size:14.3px;color:#0a1f44;font-weight:400;font-family:'Liberation Sans',sans-serif;">All</div>
<div class="r" style="left:994px;top:201px;width:1px;height:20px;background:#c8d0dc"></div>
<div class="r" style="left:1000px;top:199.5px;width:39px;height:24.5px;box-sizing:border-box;border:1px solid #b8c8e0;border-radius:7px"></div>
<div class="t" style="left:1000px;width:39px;text-align:center;top:205.15px;font-size:14.3px;color:#2e2e2e">Doc</div>
<div class="r" style="left:1044px;top:199.5px;width:28px;height:24.5px;box-sizing:border-box;border:1px solid #b8c8e0;border-radius:7px"></div>
<div class="t" style="left:1044px;width:28px;text-align:center;top:205.15px;font-size:14.3px;color:#2e2e2e">JS</div>
<div class="r" style="left:1077px;top:199.5px;width:81px;height:24.5px;box-sizing:border-box;border:1px solid #b8c8e0;border-radius:7px"></div>
<div class="t" style="left:1077px;width:81px;text-align:center;top:205.15px;font-size:14.3px;color:#2e2e2e">Fetch/XHR</div>
<div class="r" style="left:1164px;top:199.5px;width:38px;height:24.5px;box-sizing:border-box;border:1px solid #b8c8e0;border-radius:7px"></div>
<div class="t" style="left:1164px;width:38px;text-align:center;top:205.15px;font-size:14.3px;color:#2e2e2e">CSS</div>
<div class="r" style="left:1207px;top:199.5px;width:43px;height:24.5px;box-sizing:border-box;border:1px solid #b8c8e0;border-radius:7px"></div>
<div class="t" style="left:1207px;width:43px;text-align:center;top:205.15px;font-size:14.3px;color:#2e2e2e">Font</div>
<div class="r" style="left:1255.5px;top:199.5px;width:39.5px;height:24.5px;box-sizing:border-box;border:1px solid #b8c8e0;border-radius:7px"></div>
<div class="t" style="left:1255.5px;width:39.5px;text-align:center;top:205.15px;font-size:14.3px;color:#2e2e2e">Img</div>
<div class="r" style="left:1300.5px;top:199.5px;width:53.0px;height:24.5px;box-sizing:border-box;border:1px solid #b8c8e0;border-radius:7px"></div>
<div class="t" style="left:1300.5px;width:53.0px;text-align:center;top:205.15px;font-size:14.3px;color:#2e2e2e">Media</div>
<div class="r" style="left:1359px;top:199.5px;width:68.5px;height:24.5px;box-sizing:border-box;border:1px solid #b8c8e0;border-radius:7px"></div>
<div class="t" style="left:1359px;width:68.5px;text-align:center;top:205.15px;font-size:14.3px;color:#2e2e2e">Manifest</div>
<div class="r" style="left:1433px;top:199.5px;width:36px;height:24.5px;box-sizing:border-box;border:1px solid #b8c8e0;border-radius:7px"></div>
<div class="t" style="left:1433px;width:36px;text-align:center;top:205.15px;font-size:14.3px;color:#2e2e2e">WS</div>
<div class="r" style="left:1474.5px;top:199.5px;width:52.0px;height:24.5px;box-sizing:border-box;border:1px solid #b8c8e0;border-radius:7px"></div>
<div class="t" style="left:1474.5px;width:52.0px;text-align:center;top:205.15px;font-size:14.3px;color:#2e2e2e">Wasm</div>
<div class="r" style="left:1532.5px;top:199.5px;width:50.5px;height:24.5px;box-sizing:border-box;border:1px solid #b8c8e0;border-radius:7px"></div>
<div class="t" style="left:1532.5px;width:50.5px;text-align:center;top:205.15px;font-size:14.3px;color:#2e2e2e">Other</div>
<svg class="r" style="left:1598.5px;top:204.5px;" width="15" height="15" viewBox="0 0 15 15"><rect x="0.75" y="0.75" width="13.5" height="13.5" rx="2.2" fill="#fff" stroke="#5e5e5e" stroke-width="1.5"/></svg>
<div class="t" style="left:1621px;top:205.15px;font-size:14.3px;color:#2e2e2e;font-weight:400;font-family:'Liberation Sans',sans-serif;">Blocked response cookies</div>
<svg class="r" style="left:962px;top:234px;" width="15" height="15" viewBox="0 0 15 15"><rect x="0.75" y="0.75" width="13.5" height="13.5" rx="2.2" fill="#fff" stroke="#5e5e5e" stroke-width="1.5"/></svg>
<div class="t" style="left:985.3px;top:235.34px;font-size:14.3px;color:#2e2e2e;font-weight:400;font-family:'Liberation Sans',sans-serif;">Blocked requests</div>
<svg class="r" style="left:1115.5px;top:234px;" width="15" height="15" viewBox="0 0 15 15"><rect x="0" y="0" width="15" height="15" rx="2.5" fill="#0b57d0"/><path d="M3.2 7.8l2.8 2.8 5.8-6" fill="none" stroke="#fff" stroke-width="1.8"/></svg>
<div class="t" style="left:1138.8px;top:235.34px;font-size:14.3px;color:#2e2e2e;font-weight:400;font-family:'Liberation Sans',sans-serif;letter-spacing:0.35px">3rd-party requests</div>
<div class="r" style="left:952px;top:256px;width:960px;height:1px;background:#d4dfee"></div>
<svg class="r" style="left:962px;top:266px;" width="15" height="15" viewBox="0 0 15 15"><rect x="0.75" y="0.75" width="13.5" height="13.5" rx="2.2" fill="#fff" stroke="#5e5e5e" stroke-width="1.5"/></svg>
<div class="t" style="left:985px;top:267.35px;font-size:14.3px;color:#2e2e2e;font-weight:400;font-family:'Liberation Sans',sans-serif;">Big request rows</div>
<svg class="r" style="left:962px;top:298.5px;" width="15" height="15" viewBox="0 0 15 15"><rect x="0.75" y="0.75" width="13.5" height="13.5" rx="2.2" fill="#fff" stroke="#5e5e5e" stroke-width="1.5"/></svg>
<div class="t" style="left:985px;top:299.85px;font-size:14.3px;color:#2e2e2e;font-weight:400;font-family:'Liberation Sans',sans-serif;">Overview</div>
<svg class="r" style="left:1446px;top:266px;" width="15" height="15" viewBox="0 0 15 15"><rect x="0.75" y="0.75" width="13.5" height="13.5" rx="2.2" fill="#fff" stroke="#5e5e5e" stroke-width="1.5"/></svg>
<div class="t" style="left:1468.5px;top:267.35px;font-size:14.3px;color:#2e2e2e;font-weight:400;font-family:'Liberation Sans',sans-serif;letter-spacing:0.35px">Group by frame</div>
<svg class="r" style="left:1446px;top:298.5px;" width="15" height="15" viewBox="0 0 15 15"><rect x="0.75" y="0.75" width="13.5" height="13.5" rx="2.2" fill="#fff" stroke="#5e5e5e" stroke-width="1.5"/></svg>
<div class="t" style="left:1468.5px;top:299.85px;font-size:14.3px;color:#2e2e2e;font-weight:400;font-family:'Liberation Sans',sans-serif;">Screenshots</div>
<div class="r" style="left:952px;top:322px;width:960px;height:1px;background:#d4dfee"></div>
<div class="r" style="left:952px;top:323px;width:960px;height:1px;background:#e9f0fb"></div>
<div class="r" style="left:952px;top:324px;width:154px;height:32px;background:#f8fafd"></div>
<div class="r" style="left:952px;top:356px;width:154px;height:1px;background:#d4dfee"></div>
<div class="t" style="left:957.5px;top:333.35px;font-size:14.3px;color:#2e2e2e;font-weight:400;font-family:'Liberation Sans',sans-serif;">Name</div>
<div class="r" style="left:952px;top:357px;width:153px;height:26px;background:#d3e3fd"></div>
<svg class="r" style="left:958px;top:362px;" width="18" height="16" viewBox="0 0 18 16"><path d="M5.2 2.4Q3.2 2.4 3.2 4.4V6.4Q3.2 7.9 1.6 8Q3.2 8.1 3.2 9.6V11.6Q3.2 13.6 5.2 13.6M12.8 2.4Q14.8 2.4 14.8 4.4V6.4Q14.8 7.9 16.4 8Q14.8 8.1 14.8 9.6V11.6Q14.8 13.6 12.8 13.6" fill="none" stroke="#e07a48" stroke-width="1.5"/><circle cx="9" cy="5.4" r="1" fill="#e07a48"/><path d="M9 7.6V11.4" stroke="#e07a48" stroke-width="1.6"/></svg>
<div class="t" style="left:981px;top:364.33px;font-size:14.9px;color:#0a1f44;font-weight:400;font-family:'Liberation Sans',sans-serif;">update-status-c...</div>
<svg class="r" style="left:959px;top:389px;" width="15" height="15" viewBox="0 0 15 15"><rect x="0.9" y="0.9" width="13.2" height="13.2" rx="1" fill="none" stroke="#474747" stroke-width="1.6"/></svg>
<div class="t" style="left:981px;top:390.33px;font-size:14.9px;color:#2e2e2e;font-weight:400;font-family:'Liberation Sans',sans-serif;">update-status-c...</div>
<div class="r" style="left:1105px;top:324px;width:1px;height:540px;background:#d4dfee"></div>
<div class="r" style="left:1106px;top:324px;width:806px;height:32px;background:#edf1f8"></div>
<div class="r" style="left:1106px;top:356px;width:806px;height:1px;background:#d4dfee"></div>
<svg class="r" style="left:1121px;top:334px;" width="13" height="13" viewBox="0 0 13 13"><path d="M1 1l11 11M12 1L1 12" stroke="#474747" stroke-width="1.7"/></svg>
<svg class="r" style="left:1159px;top:334px;" width="10" height="10" viewBox="0 0 10 10"><circle cx="5" cy="5" r="5" fill="#a142f4"/></svg>
<div class="t" style="left:1177.2px;top:333.35px;font-size:14.3px;color:#474747;font-weight:400;font-family:'Liberation Sans',sans-serif;">Headers</div>
<div class="t" style="left:1257px;top:333.35px;font-size:14.3px;color:#474747;font-weight:400;font-family:'Liberation Sans',sans-serif;">Payload</div>
<div class="t" style="left:1333.6px;top:333.35px;font-size:14.3px;color:#474747;font-weight:400;font-family:'Liberation Sans',sans-serif;">Preview</div>
<div class="t" style="left:1496px;top:333.35px;font-size:14.3px;color:#474747;font-weight:400;font-family:'Liberation Sans',sans-serif;">Initiator</div>
<div class="t" style="left:1571.7px;top:333.35px;font-size:14.3px;color:#474747;font-weight:400;font-family:'Liberation Sans',sans-serif;">Timing</div>
<div class="t" style="left:1408.2px;top:333.35px;font-size:14.3px;color:#0b57d0;font-weight:400;font-family:'Liberation Sans',sans-serif;">Response</div>
<div class="r" style="left:1396px;top:353.5px;width:87px;height:3px;background:#0b57d0;border-radius:2px 2px 0 0"></div>
<div class="r" style="left:1174px;top:357px;width:1px;height:481px;background:#d4dfee"></div>
<div class="t" style="left:1144.8px;top:360.96px;font-size:14px;color:#1a5fb4;font-weight:400;font-family:'Liberation Mono',monospace;">1</div>
<div class="t" style="left:1144.3px;top:379.96px;font-size:14px;color:#1a5fb4;font-weight:400;font-family:'Liberation Mono',monospace;">-</div>
<div class="t" style="left:1144.3px;top:397.96px;font-size:14px;color:#1a5fb4;font-weight:400;font-family:'Liberation Mono',monospace;">-</div>
<div class="t" style="left:1144.3px;top:415.96px;font-size:14px;color:#1a5fb4;font-weight:400;font-family:'Liberation Mono',monospace;">-</div>
<div class="t" style="left:1144.3px;top:433.96px;font-size:14px;color:#1a5fb4;font-weight:400;font-family:'Liberation Mono',monospace;">-</div>
<div class="t" style="left:1144.3px;top:451.96px;font-size:14px;color:#1a5fb4;font-weight:400;font-family:'Liberation Mono',monospace;">-</div>
<div class="t" style="left:1144.3px;top:469.96px;font-size:14px;color:#1a5fb4;font-weight:400;font-family:'Liberation Mono',monospace;">-</div>
<div class="t" style="left:1144.3px;top:487.96px;font-size:14px;color:#1a5fb4;font-weight:400;font-family:'Liberation Mono',monospace;">-</div>
<div class="t" style="left:1182px;top:361.91px;font-size:13.8px;color:#1f1f1f;font-weight:400;font-family:'Liberation Mono',monospace;">{</div>
<div class="t" style="left:1182px;top:379.91px;font-size:13.8px;color:#1f1f1f;font-weight:400;font-family:'Liberation Mono',monospace;">    <span style="color:#1f1f1f">"success"</span>: <span style="color:#1f2a8c">false</span>,</div>
<div class="t" style="left:1182px;top:397.91px;font-size:13.8px;color:#1f1f1f;font-weight:400;font-family:'Liberation Mono',monospace;">    <span style="color:#1f1f1f">"data"</span>: {</div>
<div class="t" style="left:1182px;top:415.91px;font-size:13.8px;color:#1f1f1f;font-weight:400;font-family:'Liberation Mono',monospace;">        <span style="color:#1f1f1f">"msg_content"</span>: <span style="color:#a8322b">"sql.syntax.invalid"</span>,</div>
<div class="t" style="left:1182px;top:433.91px;font-size:13.8px;color:#1f1f1f;font-weight:400;font-family:'Liberation Mono',monospace;">        <span style="color:#1f1f1f">"msg_code"</span>: <span style="color:#a8322b">"sql.syntax.invalid"</span>,</div>
<div class="t" style="left:1182px;top:451.91px;font-size:13.8px;color:#1f1f1f;font-weight:400;font-family:'Liberation Mono',monospace;">        <span style="color:#1f1f1f">"payload"</span>: <span style="color:#a0186e">null</span></div>
<div class="t" style="left:1182px;top:469.91px;font-size:13.8px;color:#1f1f1f;font-weight:400;font-family:'Liberation Mono',monospace;">    }</div>
<div class="t" style="left:1182px;top:487.91px;font-size:13.8px;color:#1f1f1f;font-weight:400;font-family:'Liberation Mono',monospace;">}</div>
<div class="r" style="left:1899px;top:357px;width:13px;height:481px;background:#f1f1f1"></div>
<div class="r" style="left:1901px;top:380px;width:10px;height:348px;background:#c1c1c1"></div>
<svg class="r" style="left:1902px;top:365px;" width="8" height="5" viewBox="0 0 8 5"><path d="M4 0L8 5H0z" fill="#505050"/></svg>
<svg class="r" style="left:1902px;top:823px;" width="8" height="5" viewBox="0 0 8 5"><path d="M0 0h8L4 5z" fill="#505050"/></svg>
<div class="t" style="left:1554.7px;top:775.21px;font-size:24.7px;color:rgba(120,120,120,0.42);font-weight:400;font-family:'Liberation Sans',sans-serif;">Activate Windows</div>
<div class="t" style="left:1554.7px;top:808.78px;font-size:17.9px;color:rgba(120,120,120,0.40);font-weight:400;font-family:'Liberation Sans',sans-serif;">Go to Settings to activate Windows.</div>
<div class="r" style="left:952px;top:838px;width:960px;height:1px;background:#d4dfee"></div>
<div class="t" style="left:964.6px;top:847.85px;font-size:14.3px;color:#474747;font-weight:400;font-family:'Liberation Sans',sans-serif;">2 requests</div>
<div class="r" style="left:1044px;top:845px;width:1px;height:19px;background:#d3dbe6"></div>
<div class="t" style="left:1056.8px;top:847.85px;width:47px;overflow:hidden;font-size:14.3px;color:#474747">657 B t</div>
<svg class="r" style="left:1114px;top:846px;" width="26" height="19" viewBox="0 0 26 19"><path d="M9.6 3H7.6Q5.4 3 5.4 5.2V7.4Q5.4 9.1 2.6 9.4Q5.4 9.7 5.4 11.4V13.8Q5.4 16 7.6 16H9.6M15.6 3H17.6Q19.8 3 19.8 5.2V7.4Q19.8 9.1 22.6 9.4Q19.8 9.7 19.8 11.4V13.8Q19.8 16 17.6 16H15.6" fill="none" stroke="#1f5fd1" stroke-width="2"/></svg>
</body></html>
